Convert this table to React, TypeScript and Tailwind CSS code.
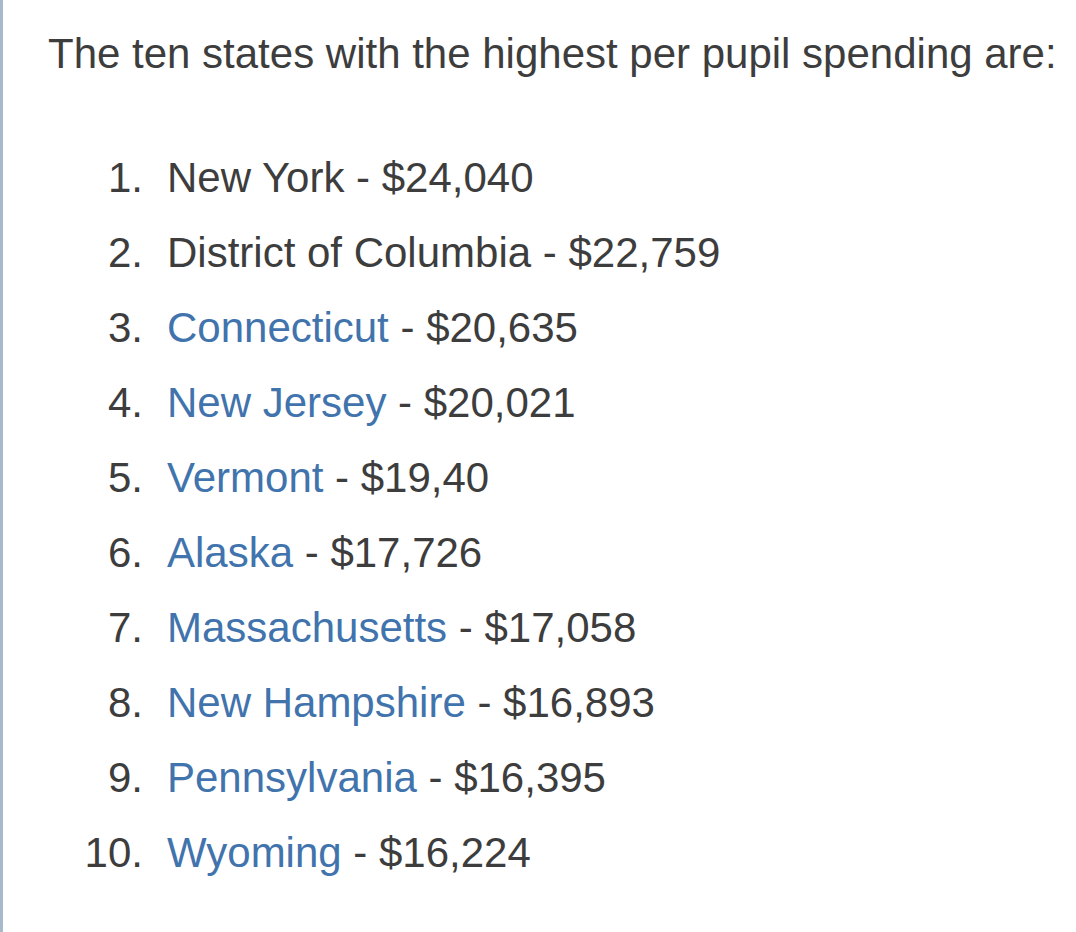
import React from "react";

const items: { name: string; link: boolean; amount: string }[] = [
  { name: "New York", link: false, amount: "$24,040" },
  { name: "District of Columbia", link: false, amount: "$22,759" },
  { name: "Connecticut", link: true, amount: "$20,635" },
  { name: "New Jersey", link: true, amount: "$20,021" },
  { name: "Vermont", link: true, amount: "$19,40" },
  { name: "Alaska", link: true, amount: "$17,726" },
  { name: "Massachusetts", link: true, amount: "$17,058" },
  { name: "New Hampshire", link: true, amount: "$16,893" },
  { name: "Pennsylvania", link: true, amount: "$16,395" },
  { name: "Wyoming", link: true, amount: "$16,224" },
];

export default function App() {
  return (
    <div
      className="min-h-[932px] bg-white border-l-[3px] border-[#a7bacb] pl-[45px] pt-[30px] text-[#3d3d3d] text-[42px]"
      style={{ fontFamily: '"Liberation Sans", Arial, sans-serif' }}
    >
      <p className="leading-[48px] whitespace-nowrap">The ten states with the highest per pupil spending are:</p>
      <ol className="mt-[62px]">
        {items.map((it, i) => (
          <li key={i} className="flex h-[75px] leading-[75px] whitespace-nowrap">
            <span className="w-[95px] text-right">{i + 1}.</span>
            <span className="ml-[24px]">
              {it.link ? <span className="text-[#4173ad]">{it.name}</span> : it.name}
              {" - "}
              {it.amount}
            </span>
          </li>
        ))}
      </ol>
    </div>
  );
}
